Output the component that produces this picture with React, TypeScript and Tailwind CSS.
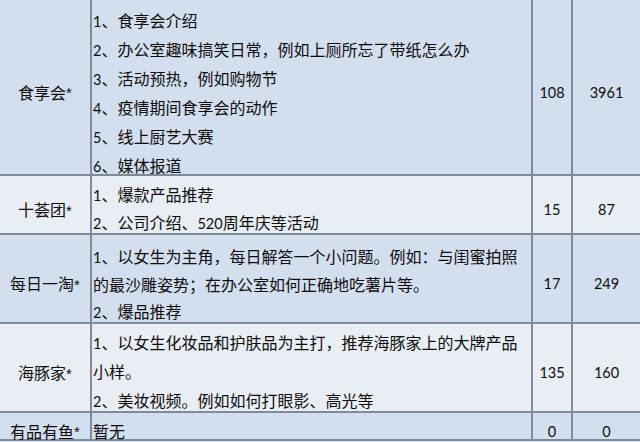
const font = { fontFamily: 'Lato, "Noto Sans CJK SC", sans-serif' };

type Row = {
  label: string;
  lines: string[];
  views: string;
  likes: string;
  bg: string;
  h: string;
  pt: string;
  lh: string;
};

const rows: Row[] = [
  {
    label: "食享会",
    lines: [
      "1、食享会介绍",
      "2、办公室趣味搞笑日常，例如上厕所忘了带纸怎么办",
      "3、活动预热，例如购物节",
      "4、疫情期间食享会的动作",
      "5、线上厨艺大赛",
      "6、媒体报道",
    ],
    views: "108",
    likes: "3961",
    bg: "bg-[#d3dfee]",
    h: "h-[176px]",
    pt: "pt-[6px]",
    lh: "leading-[29px]",
  },
  {
    label: "十荟团",
    lines: ["1、爆款产品推荐", "2、公司介绍、520周年庆等活动"],
    views: "15",
    likes: "87",
    bg: "bg-[#e9edf4]",
    h: "h-[59px]",
    pt: "pt-[5px]",
    lh: "leading-[28px]",
  },
  {
    label: "每日一淘",
    lines: [
      "1、以女生为主角，每日解答一个小问题。例如：与闺蜜拍照",
      "的最沙雕姿势；在办公室如何正确地吃薯片等。",
      "2、爆品推荐",
    ],
    views: "17",
    likes: "249",
    bg: "bg-[#d3dfee]",
    h: "h-[89px]",
    pt: "pt-[8px]",
    lh: "leading-[27.5px]",
  },
  {
    label: "海豚家",
    lines: [
      "1、以女生化妆品和护肤品为主打，推荐海豚家上的大牌产品",
      "小样。",
      "2、美妆视频。例如如何打眼影、高光等",
    ],
    views: "135",
    likes: "160",
    bg: "bg-[#e9edf4]",
    h: "h-[89px]",
    pt: "pt-[4px]",
    lh: "leading-[29px]",
  },
  {
    label: "有品有鱼",
    lines: ["暂无"],
    views: "0",
    likes: "0",
    bg: "bg-[#d3dfee]",
    h: "h-[28px]",
    pt: "pt-[5px]",
    lh: "leading-[28px]",
  },
];

// digits in the original are Calibri, which runs narrower than Lato at the same size
function Line({ text }: { text: string }) {
  const parts = text.split(/(\d+)/);
  return (
    <div>
      {parts.map((part, i) =>
        /^\d+$/.test(part) ? (
          <span key={i} className="text-[14.5px] leading-none">
            {part}
          </span>
        ) : (
          <span key={i}>{part}</span>
        )
      )}
    </div>
  );
}

export default function App() {
  return (
    <div className="h-[442px] w-[640px] overflow-hidden bg-[#d3dfee] text-[16px] text-[#0d0d0d]" style={font}>
      {rows.map((row) => (
        <div key={row.label} className={`flex ${row.h} border-b-2 border-[#7f8a9b] ${row.bg}`}>
          <div className="flex w-[92px] shrink-0 items-center justify-center border-r-2 border-[#7f8a9b] pt-[11px] whitespace-nowrap">
            {row.label}
            <span className="font-['Liberation_Sans'] text-[15px] leading-none">*</span>
          </div>
          <div className={`w-[441px] shrink-0 border-r-2 border-[#7f8a9b] pl-[1px] whitespace-nowrap ${row.pt} ${row.lh}`}>
            {row.lines.map((line) => (
              <Line key={line} text={line} />
            ))}
          </div>
          <div className="flex w-[40px] shrink-0 items-center justify-center border-r-2 border-[#7f8a9b] pt-[11px] text-[14.5px]">
            {row.views}
          </div>
          <div className="flex flex-1 items-center justify-center pt-[11px] text-[14.5px]">{row.likes}</div>
        </div>
      ))}
    </div>
  );
}
